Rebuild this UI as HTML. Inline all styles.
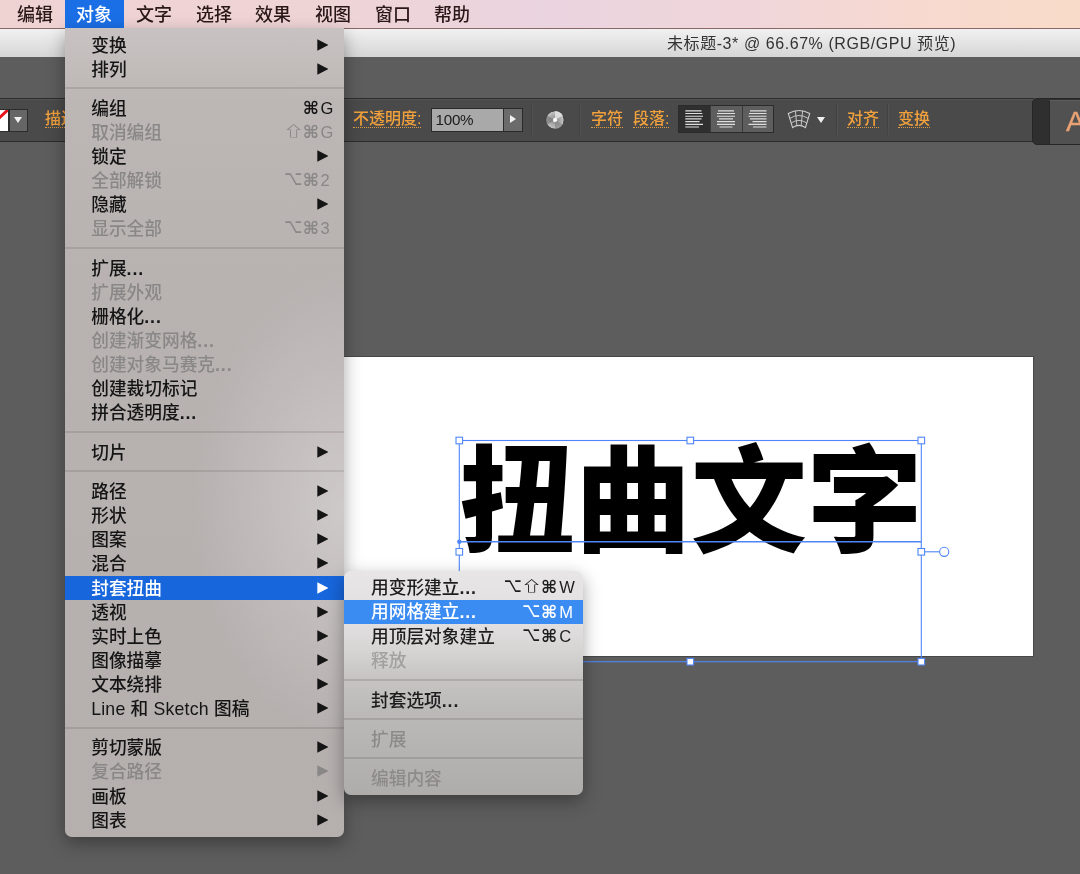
<!DOCTYPE html>
<html lang="zh-CN">
<head>
<meta charset="utf-8">
<title>对象 - 封套扭曲</title>
<style>
*{box-sizing:border-box;margin:0;padding:0}
html,body{width:1080px;height:874px;overflow:hidden;background:#5d5d5d}
body{position:relative;font-family:"Liberation Sans","Noto Sans CJK SC",sans-serif;color:#111}
.abs{position:absolute}
#menubar span,.row,#title,.or,#tb div{will-change:transform}
#menubar{left:0;top:0;width:1080px;height:28px;background:linear-gradient(90deg,#efd3d3 0%,#efd4d6 30%,#ead4df 50%,#f0d6da 70%,#f7d9cf 85%,#f8dbc8 100%);}
#menubar span{position:absolute;top:0;height:28px;line-height:30px;font-size:18px;color:#2a1818;white-space:nowrap;font-weight:500}
#menubar .sel{background:#1b6fe6;color:#fff;height:28px}
#titlebar{left:0;top:28px;width:1080px;height:28.6px;background:linear-gradient(#f1f1f1,#d6d6d6);border-top:1px solid #8a6868}
#title{left:667px;top:29px;height:28px;line-height:29px;font-size:16px;letter-spacing:.57px;color:#333;white-space:nowrap}
#toolbar{left:0;top:98px;width:1034px;height:43.5px;background:#4a4a4a;border-top:1.5px solid #2c2c2c;border-bottom:1.5px solid #2c2c2c;box-shadow:inset 0 1px 0 #545454}
.or{position:absolute;color:#f0a03c;font-size:16px;line-height:19px;white-space:nowrap;border-bottom:1.5px dotted #e09a40;height:19.3px;font-weight:500}
#canvas{left:340px;top:357px;width:693.3px;height:298.7px;background:#fff;box-shadow:0 0 0 .8px #444}
#bigtext{left:459.3px;top:392.6px;font-family:"Noto Sans CJK SC",sans-serif;font-weight:900;font-size:115.8px;line-height:200px;height:200px;color:#000;white-space:nowrap}
.tri-d{width:0;height:0;border-top:6px solid #f0f0f0;border-left:4.5px solid transparent;border-right:4.5px solid transparent}
.tri-r{width:0;height:0;border-left:6.5px solid #f0f0f0;border-top:4.5px solid transparent;border-bottom:4.5px solid transparent}
.vsep{top:104px;width:1px;height:31px;background:#424242;box-shadow:1px 0 0 #525252}
.menu{position:absolute;overflow:hidden}
#main{left:65px;top:28px;width:279.4px;height:809px;background:radial-gradient(ellipse 150px 230px at 100% 59%,rgba(214,210,209,.75),rgba(200,195,194,0) 100%),linear-gradient(#c8c2c2 0,#c3bdbc 4%,#bcb6b5 9%,#b8b2b1 30%,#b5afae 100%);border-radius:0 0 7px 7px;box-shadow:0 6px 18px rgba(0,0,0,.35)}
#sub{left:344.3px;top:570.6px;width:238.5px;height:224px;background:linear-gradient(#e7e5e5 0%,#e1dfdf 24%,#d6d3d3 36%,#c6c3c3 48%,#bbb8b8 64%,#afacac 100%);border-radius:7px;box-shadow:0 6px 18px rgba(0,0,0,.35)}
.row{position:absolute;left:0;width:100%;height:24px;line-height:24px;font-size:17.7px;color:#151515;white-space:nowrap;font-weight:500}
.row .lbl{position:absolute;top:.5px}
.g{position:absolute;top:0;height:24px;line-height:24px}
.key{font-size:16.5px;font-family:"Liberation Sans",sans-serif}
.cmd{font-family:"DejaVu Sans",sans-serif;font-size:17.5px;font-weight:bold;margin-left:-1.3px;line-height:24.6px}
.opt{font-family:"DejaVu Sans",sans-serif;font-size:15.6px;margin-left:-1.2px;transform:scaleY(1.3);transform-origin:50% 55%;line-height:23px}
.shf{font-family:"Noto Sans CJK SC",sans-serif;font-weight:700;font-size:17px;transform:scale(1.25,.8);transform-origin:0 50%;margin-left:-2.6px;line-height:19px}
.d{letter-spacing:.9px;font-weight:700}
.row.dis{color:#8a8787}
#sub .row{font-weight:500;color:#1e1e1e}
#sub .row.hi{color:#fff}
#sub .row.dis{color:#8d8a8a}
#sub .row.dis.l{color:#a3a0a0}
.row.hi{color:#fff;background:#1766dc}
#sub .row.hi{background:#3b8cf2}
.arr{position:absolute;top:6.3px;width:11.2px;height:11.4px;background:#151515;clip-path:polygon(0 0,100% 50%,0 100%)}
.dis .arr{background:#8a8787}
.hi .arr{background:#fff}
.sep{position:absolute;left:0;width:100%;height:1.4px;margin-top:.3px;background:rgba(40,20,20,.11)}
#sub .sep{background:rgba(30,20,20,.13)}
</style>
</head>
<body>
<div id="menubar" class="abs">
<span style="left:17px">编辑</span>
<span class="sel" style="left:65px;width:59.3px;padding-left:11px">对象</span>
<span style="left:136px">文字</span>
<span style="left:196px">选择</span>
<span style="left:255px">效果</span>
<span style="left:315px">视图</span>
<span style="left:375px">窗口</span>
<span style="left:434px">帮助</span>
</div>
<div id="titlebar" class="abs"></div>
<div id="title" class="abs">未标题-3* @ 66.67% (RGB/GPU 预览)</div>
<div id="toolbar" class="abs"></div>
<div id="tb">
<div class="abs" style="left:-16px;top:108.5px;width:24.5px;height:23px;background:#fff;border:1px solid #2c2c2c;overflow:hidden"><div style="position:absolute;left:-5px;top:9.2px;width:33px;height:2.8px;background:#e8141c;transform:rotate(-43deg)"></div></div>
<div class="abs" style="left:8.5px;top:108.5px;width:19px;height:23px;background:#666;border:1px solid #2c2c2c"></div>
<div class="tri-d abs" style="left:14.2px;top:116.8px"></div>
<span class="or" style="left:45px;top:109px">描边:</span>
<span class="or" style="left:352.5px;top:109px">不透明度:</span>
<div class="abs" style="left:430.5px;top:108px;width:73px;height:23.5px;background:#a9a9a9;border:1px solid #2a2a2a;font-size:15.2px;line-height:21px;padding-left:3.6px;color:#1a1a1a;letter-spacing:-.3px">100%</div>
<div class="abs" style="left:502.5px;top:108px;width:20px;height:23.5px;background:#6b6b6b;border:1px solid #2a2a2a"></div>
<div class="tri-r abs" style="left:510px;top:115px"></div>
<div class="vsep abs" style="left:531px"></div>
<svg class="abs" style="left:545px;top:109.5px" width="20" height="20" viewBox="0 0 20 20"><defs><radialGradient id="g1" cx="50%" cy="50%" r="50%"><stop offset="0" stop-color="#f4f4f4"/><stop offset=".3" stop-color="#9a9a9a"/><stop offset="1" stop-color="#c8c8c8"/></radialGradient></defs><circle cx="10" cy="10" r="9.2" fill="url(#g1)" stroke="#3a3a3a" stroke-width="1"/><path d="M10 10 L10 1 A9 9 0 0 1 17.8 5.5 Z" fill="#e6e6e6" opacity=".8"/><path d="M10 10 L2.2 14.5 A9 9 0 0 1 2.2 5.5 Z" fill="#777" opacity=".7"/><path d="M10 10 L17.8 14.5 A9 9 0 0 1 10 19 Z" fill="#808080" opacity=".6"/><circle cx="10" cy="10" r="2" fill="#fafafa"/></svg>
<div class="vsep abs" style="left:579px"></div>
<span class="or" style="left:590.5px;top:109px">字符</span>
<span class="or" style="left:632.5px;top:109px">段落:</span>
<div class="abs" style="left:678px;top:105px;width:96px;height:28px;background:#5e5e5e;border:1px solid #2b2b2b"></div>
<div class="abs" style="left:679px;top:106px;width:31px;height:26px;background:#2f2f2f"></div>
<div class="abs" style="left:710px;top:106px;width:1px;height:26px;background:#3a3a3a"></div>
<div class="abs" style="left:741.5px;top:106px;width:1px;height:26px;background:#3a3a3a"></div>
<svg class="abs" style="left:678px;top:105px" width="97" height="28" viewBox="0 0 97 28" fill="none" stroke="#dedede" stroke-width="1.15">
<path d="M7.3 5.8H23.5M7.3 8.5H24.3M7.3 11.2H25M7.3 13.9H23.5M7.3 16.6H21.5M7.3 19.3H25M7.3 22H21"/>
<path d="M40 5.8H56M39 8.5H57M39 11.2H57M41 13.9H55M39 16.6H57M39 19.3H57M41.5 22H54.5"/>
<path d="M72 5.8H88.5M71 8.5H88.5M70.5 11.2H88.5M72 13.9H88.5M74.5 16.6H88.5M70.5 19.3H88.5M75 22H88.5"/>
</svg>
<svg class="abs" style="left:787px;top:108.5px" width="24" height="20" viewBox="0 0 24 20" fill="none" stroke="#d0d0d0" stroke-width="1.1"><path d="M1.3 4.6 Q12 -1.6 22.7 4.6 L18.4 18.6 Q12 14.2 5.6 18.6 Z"/><path d="M2.8 9.4 Q12 3.6 21.2 9.4M4.2 14 Q12 8.8 19.8 14" stroke-width=".9"/><path d="M8.4 1.9 L9.8 16.3M15.6 1.9 L14.2 16.3" stroke-width=".9"/></svg>
<div class="tri-d abs" style="left:817.3px;top:117px"></div>
<div class="vsep abs" style="left:835.5px"></div>
<span class="or" style="left:846.5px;top:109px">对齐</span>
<div class="vsep abs" style="left:886.5px"></div>
<span class="or" style="left:898px;top:109px">变换</span>
<div class="abs" style="left:1032px;top:98px;width:60px;height:46.5px;background:#2f2f2f;border:1.5px solid #262626;border-radius:5px 0 0 5px"></div>
<div class="abs" style="left:1049px;top:99.5px;width:40px;height:43.5px;background:#515151;border-left:1px solid #272727;border-top:1px solid #5e5e5e"></div>
<div class="abs" style="left:1066.3px;top:104px;font-size:28.5px;line-height:34px;color:#e8a274;-webkit-text-stroke:.4px #e8a274">A</div>
</div>
<div id="canvas" class="abs"></div>
<div id="bigtext" class="abs">扭曲文字</div>
<svg id="sel" class="abs" style="left:440px;top:420px" width="540" height="260" viewBox="440 420 540 260" fill="none" stroke="#4f86f7" stroke-width="1.1">
<rect x="459.3" y="440.5" width="462" height="221.2"/>
<path d="M459.3 541.8H921.3" stroke-width="1.4"/>
<path d="M925 551.8H939.5"/>
<circle cx="944.2" cy="551.8" r="4.6" fill="#fff"/>
<circle cx="459.3" cy="541.8" r="2.2" fill="#4f86f7" stroke="none"/>
<g fill="#fff">
<rect x="456" y="437.2" width="6.6" height="6.6"/>
<rect x="687" y="437.2" width="6.6" height="6.6"/>
<rect x="918" y="437.2" width="6.6" height="6.6"/>
<rect x="456" y="548.5" width="6.6" height="6.6"/>
<rect x="918" y="548.5" width="6.6" height="6.6"/>
<rect x="456" y="658.4" width="6.6" height="6.6"/>
<rect x="687" y="658.4" width="6.6" height="6.6"/>
<rect x="918" y="658.4" width="6.6" height="6.6"/>
</g>
</svg>
<div id="main" class="menu">
<div class="row" style="top:4.7px"><span class="lbl" style="left:26.2px">变换</span><span class="arr" style="left:252.3px"></span></div>
<div class="row" style="top:28.8px"><span class="lbl" style="left:26.2px">排列</span><span class="arr" style="left:252.3px"></span></div>
<div class="sep" style="top:59px"></div>
<div class="row" style="top:68px"><span class="lbl" style="left:26.2px">编组</span><span class="g key" style="left:255.6px">G</span><span class="g cmd" style="left:239px">⌘</span></div>
<div class="row dis" style="top:92px"><span class="lbl" style="left:26.2px">取消编组</span><span class="g key" style="left:255.6px">G</span><span class="g cmd" style="left:239px">⌘</span><span class="g shf" style="left:220.5px">⇧</span></div>
<div class="row" style="top:116px"><span class="lbl" style="left:26.2px">锁定</span><span class="arr" style="left:252.3px"></span></div>
<div class="row dis" style="top:140px"><span class="lbl" style="left:26.2px">全部解锁</span><span class="g key" style="left:255.6px">2</span><span class="g cmd" style="left:239px">⌘</span><span class="g opt" style="left:220.5px">⌥</span></div>
<div class="row" style="top:164px"><span class="lbl" style="left:26.2px">隐藏</span><span class="arr" style="left:252.3px"></span></div>
<div class="row dis" style="top:188px"><span class="lbl" style="left:26.2px">显示全部</span><span class="g key" style="left:255.6px">3</span><span class="g cmd" style="left:239px">⌘</span><span class="g opt" style="left:220.5px">⌥</span></div>
<div class="sep" style="top:219px"></div>
<div class="row" style="top:228px"><span class="lbl" style="left:26.2px">扩展<span class="d">...</span></span></div>
<div class="row dis" style="top:252px"><span class="lbl" style="left:26.2px">扩展外观</span></div>
<div class="row" style="top:276px"><span class="lbl" style="left:26.2px">栅格化<span class="d">...</span></span></div>
<div class="row dis" style="top:300px"><span class="lbl" style="left:26.2px">创建渐变网格<span class="d">...</span></span></div>
<div class="row dis" style="top:324px"><span class="lbl" style="left:26.2px">创建对象马赛克<span class="d">...</span></span></div>
<div class="row" style="top:348px"><span class="lbl" style="left:26.2px">创建裁切标记</span></div>
<div class="row" style="top:372px"><span class="lbl" style="left:26.2px">拼合透明度<span class="d">...</span></span></div>
<div class="sep" style="top:403px"></div>
<div class="row" style="top:411.6px"><span class="lbl" style="left:26.2px">切片</span><span class="arr" style="left:252.3px"></span></div>
<div class="sep" style="top:442.2px"></div>
<div class="row" style="top:451.3px"><span class="lbl" style="left:26.2px">路径</span><span class="arr" style="left:252.3px"></span></div>
<div class="row" style="top:475.3px"><span class="lbl" style="left:26.2px">形状</span><span class="arr" style="left:252.3px"></span></div>
<div class="row" style="top:499.3px"><span class="lbl" style="left:26.2px">图案</span><span class="arr" style="left:252.3px"></span></div>
<div class="row" style="top:523.3px"><span class="lbl" style="left:26.2px">混合</span><span class="arr" style="left:252.3px"></span></div>
<div class="row hi" style="top:547.6px"><span class="lbl" style="left:26.2px">封套扭曲</span><span class="arr" style="left:252.3px"></span></div>
<div class="row" style="top:571.5px"><span class="lbl" style="left:26.2px">透视</span><span class="arr" style="left:252.3px"></span></div>
<div class="row" style="top:595.5px"><span class="lbl" style="left:26.2px">实时上色</span><span class="arr" style="left:252.3px"></span></div>
<div class="row" style="top:619.7px"><span class="lbl" style="left:26.2px">图像描摹</span><span class="arr" style="left:252.3px"></span></div>
<div class="row" style="top:643.7px"><span class="lbl" style="left:26.2px">文本绕排</span><span class="arr" style="left:252.3px"></span></div>
<div class="row" style="top:667.9px"><span class="lbl" style="left:26.2px"><span style="letter-spacing:.2px">Line 和 Sketch 图稿</span></span><span class="arr" style="left:252.3px"></span></div>
<div class="sep" style="top:699px"></div>
<div class="row" style="top:707px"><span class="lbl" style="left:26.2px">剪切蒙版</span><span class="arr" style="left:252.3px"></span></div>
<div class="row dis" style="top:731px"><span class="lbl" style="left:26.2px">复合路径</span><span class="arr" style="left:252.3px"></span></div>
<div class="row" style="top:755.5px"><span class="lbl" style="left:26.2px">画板</span><span class="arr" style="left:252.3px"></span></div>
<div class="row" style="top:779.5px"><span class="lbl" style="left:26.2px">图表</span><span class="arr" style="left:252.3px"></span></div>
</div>
<div id="sub" class="menu">
<div class="row" style="top:4.8px"><span class="lbl" style="left:27px">用变形建立<span class="d">...</span></span><span class="g key" style="left:215.3px">W</span><span class="g cmd" style="left:198.3px">⌘</span><span class="g shf" style="left:179.5px">⇧</span><span class="g opt" style="left:160.9px">⌥</span></div>
<div class="row hi" style="top:29.8px"><span class="lbl" style="left:27px;top:0.4px">用网格建立<span class="d">...</span></span><span class="g key" style="left:215.3px">M</span><span class="g cmd" style="left:198.3px">⌘</span><span class="g opt" style="left:179.5px">⌥</span></div>
<div class="row" style="top:53.2px"><span class="lbl" style="left:27px">用顶层对象建立</span><span class="g key" style="left:215.3px">C</span><span class="g cmd" style="left:198.3px">⌘</span><span class="g opt" style="left:179.5px">⌥</span></div>
<div class="row dis l" style="top:77.4px"><span class="lbl" style="left:27px">释放</span></div>
<div class="sep" style="top:108.4px"></div>
<div class="row" style="top:117.4px"><span class="lbl" style="left:27px">封套选项<span class="d">...</span></span></div>
<div class="sep" style="top:147.4px"></div>
<div class="row dis" style="top:156.4px"><span class="lbl" style="left:27px">扩展</span></div>
<div class="sep" style="top:186.4px"></div>
<div class="row dis" style="top:195.4px"><span class="lbl" style="left:27px">编辑内容</span></div>
</div>
</body>
</html>
